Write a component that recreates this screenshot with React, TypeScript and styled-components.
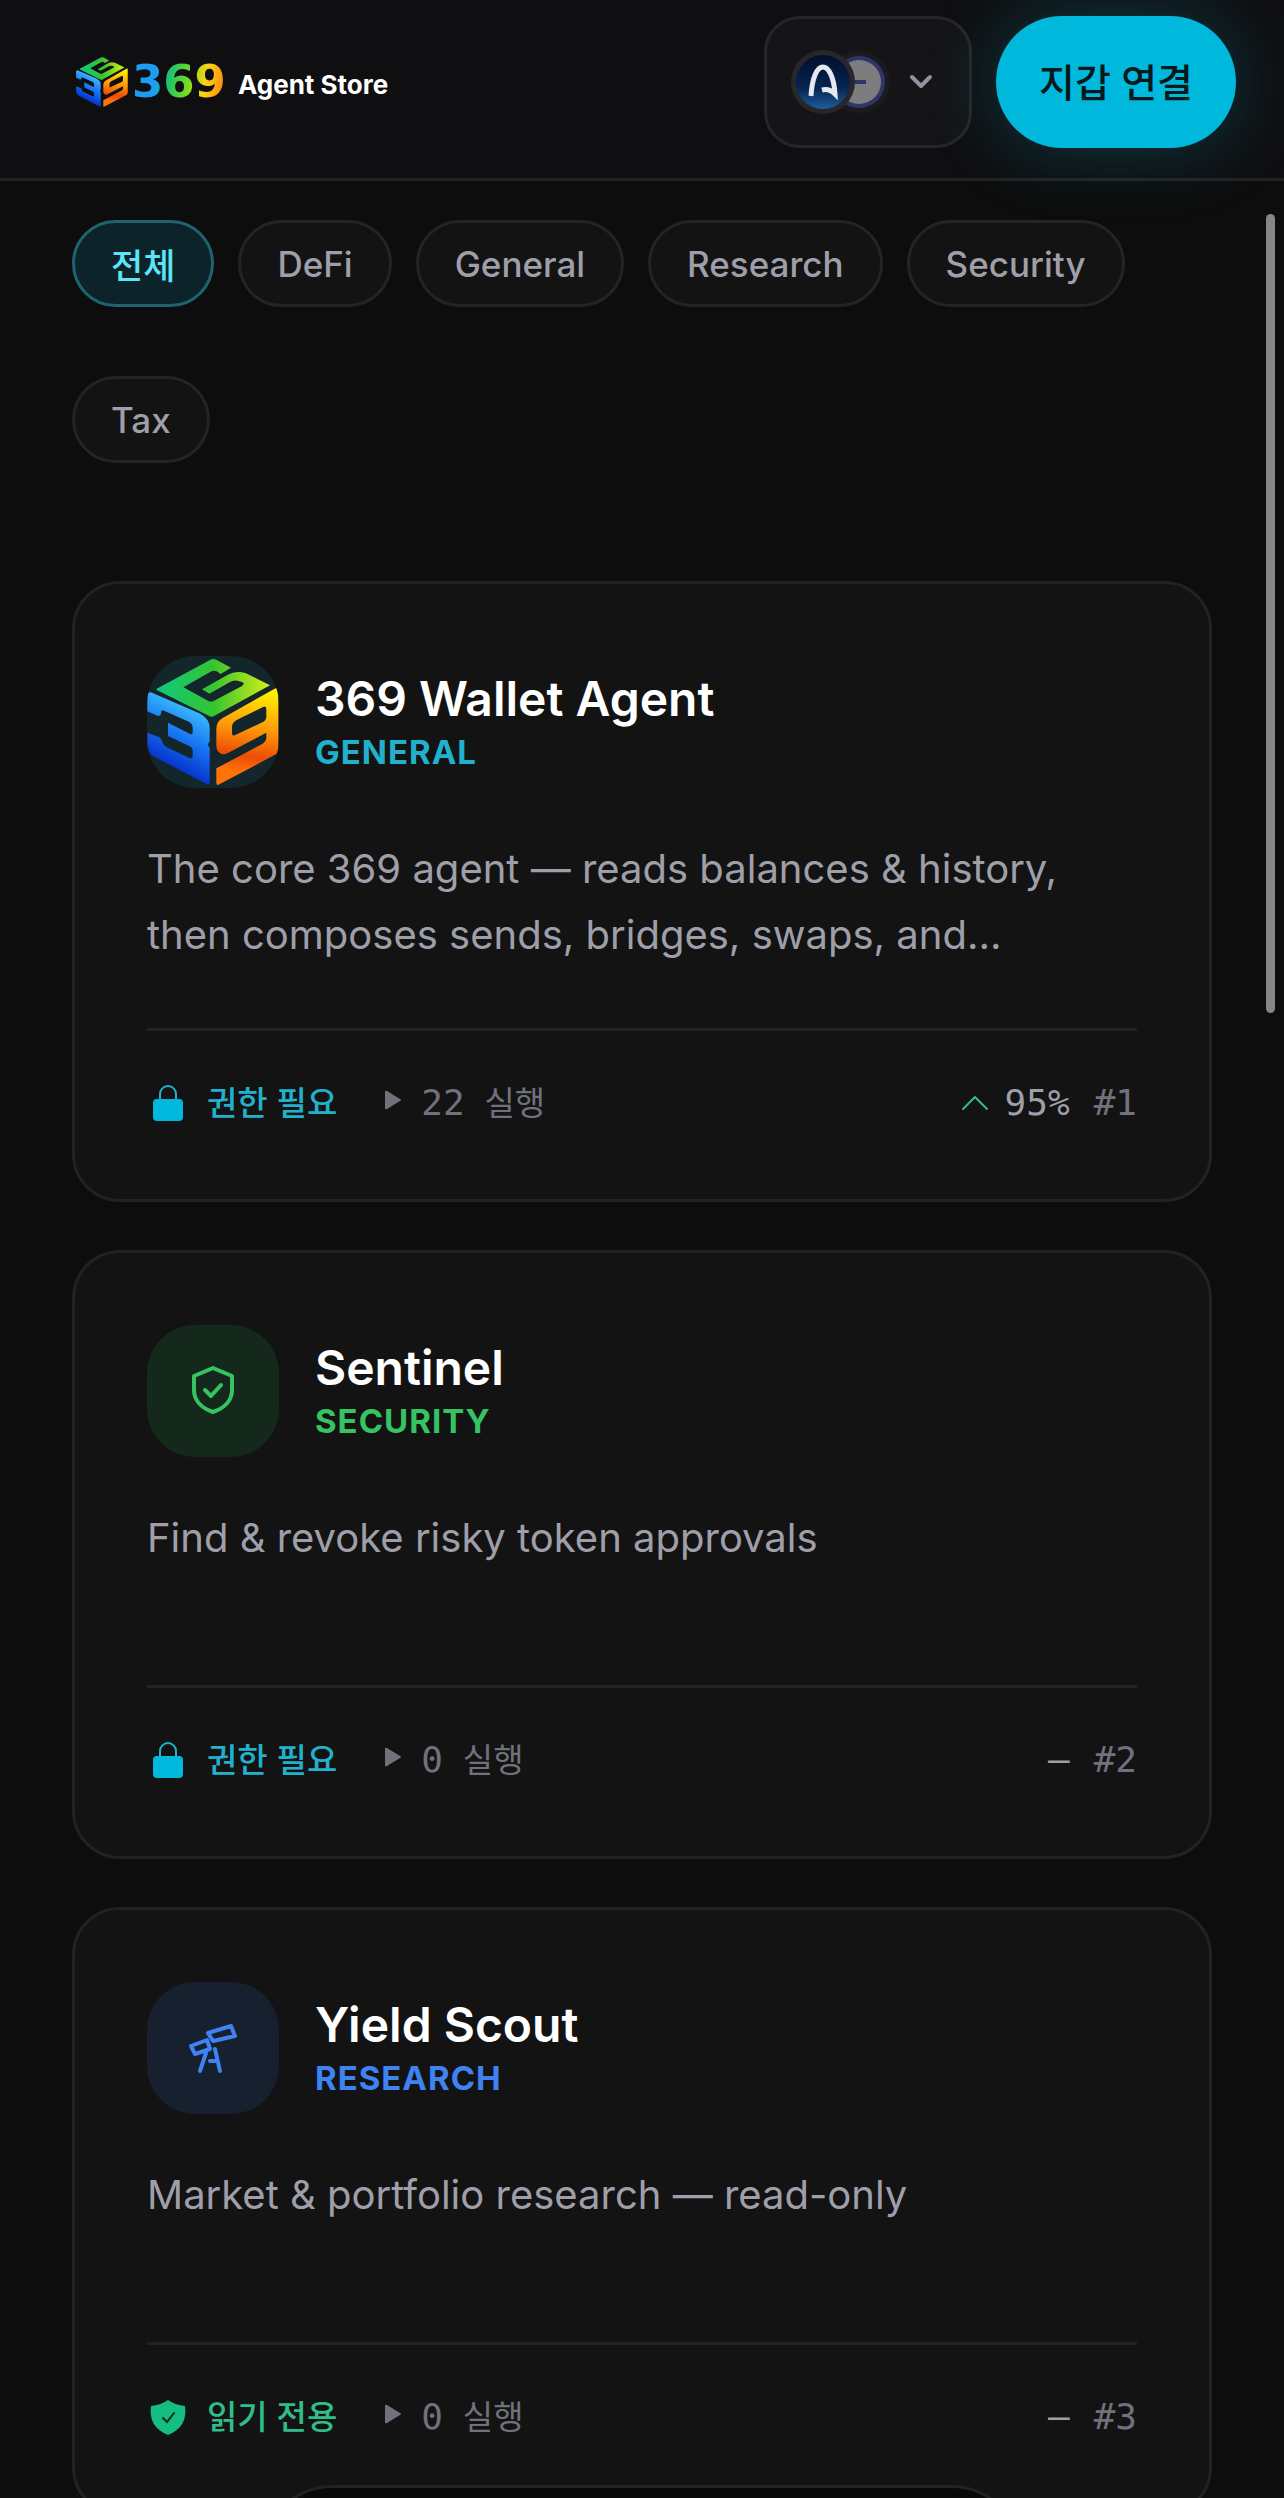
import { useId, useState } from 'react'
import styled, { createGlobalStyle } from 'styled-components'

type Tone = 'cyan' | 'green' | 'blue'

type Agent = {
  name: string
  category: string
  tone: Tone
  icon: 'cube' | 'shield' | 'telescope'
  description: string
  access: 'permission' | 'readonly'
  runs: number
  score?: string
  rank: number
}

const tones: Record<Tone, { text: string; tile: string }> = {
  cyan: { text: '#22b1cd', tile: '#13262b' },
  green: { text: '#36c463', tile: '#14281c' },
  blue: { text: '#3f82f2', tile: '#16202e' },
}

const filters = ['전체', 'DeFi', 'General', 'Research', 'Security', 'Tax']

const agents: Agent[] = [
  {
    name: '369 Wallet Agent',
    category: 'General',
    tone: 'cyan',
    icon: 'cube',
    description: 'The core 369 agent — reads balances & history, then composes sends, bridges, swaps, and…',
    access: 'permission',
    runs: 22,
    score: '95%',
    rank: 1,
  },
  {
    name: 'Sentinel',
    category: 'Security',
    tone: 'green',
    icon: 'shield',
    description: 'Find & revoke risky token approvals',
    access: 'permission',
    runs: 0,
    rank: 2,
  },
  {
    name: 'Yield Scout',
    category: 'Research',
    tone: 'blue',
    icon: 'telescope',
    description: 'Market & portfolio research — read-only',
    access: 'readonly',
    runs: 0,
    rank: 3,
  },
]

export default function App() {
  const [filter, setFilter] = useState(filters[0])

  return (
    <>
      <GlobalStyle />
      <Shell>
        <Header>
          <Brand href="#">
            <CubeMark size={52} />
            <BrandNumber>369</BrandNumber>
            <BrandName>Agent Store</BrandName>
          </Brand>
          <HeaderActions>
            <ChainButton type="button" aria-label="Networks">
              <Chains />
              <ChevronDown />
            </ChainButton>
            <ConnectButton type="button">지갑 연결</ConnectButton>
          </HeaderActions>
        </Header>

        <Main>
          <Filters>
            {filters.map(name => (
              <Chip
                key={name}
                type="button"
                $active={name === filter}
                aria-pressed={name === filter}
                onClick={() => setFilter(name)}
              >
                {name}
              </Chip>
            ))}
          </Filters>

          <Cards>
            {agents.map(agent => (
              <AgentCard key={agent.name} agent={agent} />
            ))}
          </Cards>
        </Main>

        <ScrollThumb />
        <Dock aria-label="Main" />
      </Shell>
    </>
  )
}

function AgentCard({ agent }: { agent: Agent }) {
  const readonly = agent.access === 'readonly'

  return (
    <Card>
      <CardHead>
        <Tile $tone={agent.tone}>
          {agent.icon === 'cube' && <CubeMark size={132} />}
          {agent.icon === 'shield' && <ShieldIcon />}
          {agent.icon === 'telescope' && <TelescopeIcon />}
        </Tile>
        <div>
          <Name>{agent.name}</Name>
          <Category $tone={agent.tone}>{agent.category}</Category>
        </div>
      </CardHead>

      <Description>{agent.description}</Description>

      <CardFoot>
        <Access $readonly={readonly}>
          {readonly ? <ShieldSolid /> : <LockSolid />}
          {readonly ? '읽기 전용' : '권한 필요'}
        </Access>
        <Runs>
          <PlayIcon />
          <span>
            {agent.runs}
            <small> 실행</small>
          </span>
        </Runs>
        <Stats>
          <Score>
            {agent.score && <ChevronUp />}
            {agent.score ?? '—'}
          </Score>
          <span>#{agent.rank}</span>
        </Stats>
      </CardFoot>
    </Card>
  )
}

function CubeMark({ size }: { size: number }) {
  const id = useId()

  return (
    <svg width={size} height={size} viewBox="50 48 394 396" aria-hidden="true">
      <defs>
        <linearGradient id={`${id}top`} x1="80" y1="150" x2="415" y2="140" gradientUnits="userSpaceOnUse">
          <stop offset="0" stopColor="#10c880" />
          <stop offset="0.5" stopColor="#34c430" />
          <stop offset="1" stopColor="#d4ee18" />
        </linearGradient>
        <linearGradient id={`${id}left`} x1="200" y1="220" x2="110" y2="390" gradientUnits="userSpaceOnUse">
          <stop offset="0" stopColor="#38b4fc" />
          <stop offset="0.45" stopColor="#1674f2" />
          <stop offset="1" stopColor="#0428c4" />
        </linearGradient>
        <linearGradient id={`${id}right`} x1="390" y1="150" x2="350" y2="400" gradientUnits="userSpaceOnUse">
          <stop offset="0" stopColor="#fff000" />
          <stop offset="0.45" stopColor="#ff9c08" />
          <stop offset="0.8" stopColor="#ec4c08" />
          <stop offset="1" stopColor="#ff7408" />
        </linearGradient>
      </defs>
      <path
        fill={`url(#${id}top)`}
        d="M78 146 238 60Q248 54 258 60L301 83 270 102 258 94Q250 90 240 95L158 142 232 182Q240 187 250 182L334 138Q344 131 334 126L320 122Q308 120 298 126L236 161 214 148 290 105Q316 90 346 100L418 136 254 226Q244 234 234 227L78 150Z"
      />
      <path
        fill={`url(#${id}left)`}
        d="M50 164Q54 154 64 158L206 220Q237 236 237 264V304L231 314 237 324V426Q237 436 228 432L62 346 50 322V278L86 292Q92 296 95 306 98 316 108 322L176 354Q186 358 186 348V334Q186 324 177 319L112 288V248L177 281Q186 286 186 276V264Q186 252 176 246L100 212Q92 208 91 218 90 230 80 227L50 214Z"
      />
      <path
        fill={`url(#${id}right)`}
        fillRule="evenodd"
        d="M257 266Q257 244 276 234L432 146Q443 140 443 152V326Q443 340 430 346L266 433Q257 438 257 428V385L396 311Q407 304 407 292V278L290 340Q274 347 264 336 257 330 257 316ZM318 240Q304 248 304 260V280Q304 290 314 285L397 246Q407 240 407 230V208Q407 196 397 201Z"
      />
    </svg>
  )
}

function Chains() {
  const id = useId()

  return (
    <svg width="100" height="64" viewBox="0 0 100 64" aria-hidden="true">
      <defs>
        <linearGradient id={id} x1="0" y1="0" x2="0" y2="1">
          <stop offset="0" stopColor="#020f2c" />
          <stop offset="0.6" stopColor="#052450" />
          <stop offset="1" stopColor="#1f5c9c" />
        </linearGradient>
      </defs>
      <circle cx="68" cy="32" r="31" fill="#1b1b1f" />
      <circle cx="68" cy="32" r="26" fill="#30346a" />
      <circle cx="68" cy="32" r="22" fill="#7d7d7f" />
      <path d="M56 32H75" stroke="#30346a" strokeWidth="4" />
      <circle cx="32" cy="32" r="32" fill="#27272b" />
      <circle cx="32" cy="32" r="27" fill={`url(#${id})`} />
      <path d="M20 46C21 28 26 17 32 17S43 28 44 44Q38 38 31 40" stroke="#e4e8f0" strokeWidth="5" fill="none" />
    </svg>
  )
}

function ChevronDown() {
  return (
    <svg width="36" height="36" viewBox="0 0 36 36" fill="none" stroke="#92929d" strokeWidth="4" aria-hidden="true">
      <path d="M9 13 18 22 27 13" strokeLinecap="round" strokeLinejoin="round" />
    </svg>
  )
}

function ChevronUp() {
  return (
    <svg width="36" height="36" viewBox="0 0 36 36" fill="none" stroke="#2fbd8a" strokeWidth="2" aria-hidden="true">
      <path d="M6 24 18 12 30 24" strokeLinecap="round" strokeLinejoin="round" />
    </svg>
  )
}

function PlayIcon() {
  return (
    <svg width="36" height="36" viewBox="0 0 36 36" fill="#71717b" aria-hidden="true">
      <path d="M12 7Q12 5 14 6L27 14Q29 15 27 16L14 24Q12 25 12 23Z" />
    </svg>
  )
}

function LockSolid() {
  return (
    <svg width="42" height="42" viewBox="0 0 42 42" aria-hidden="true">
      <path d="M13 19V12A8 8 0 0 1 29 12V19" fill="none" stroke="#22b1cd" strokeWidth="2" />
      <rect x="6" y="17" width="30" height="22" rx="4" fill="#00b8db" />
    </svg>
  )
}

function ShieldSolid() {
  return (
    <svg width="42" height="42" viewBox="0 0 42 42" aria-hidden="true">
      <path d="M21 4Q28 9 38 10Q41 31 21 39Q1 31 4 10Q14 9 21 4Z" fill="#14bd80" />
      <path d="M16 22 20 26 27 17" fill="none" stroke="#10251e" strokeWidth="2" strokeLinecap="round" />
    </svg>
  )
}

function ShieldIcon() {
  return (
    <svg width="60" height="60" viewBox="0 0 60 60" fill="none" stroke="#36c463" strokeWidth="4" aria-hidden="true">
      <path d="M30 7 49 15V29C49 39 42 47 30 51 18 47 11 39 11 29V15Z" strokeLinejoin="round" />
      <path d="M22 29 28 35 38 24" strokeLinecap="round" strokeLinejoin="round" />
    </svg>
  )
}

function TelescopeIcon() {
  return (
    <svg width="60" height="60" viewBox="0 0 60 60" fill="none" stroke="#3f82f2" strokeWidth="4" aria-hidden="true">
      <g strokeLinejoin="round" strokeLinecap="round">
        <path d="M25 15 48 8 52 18 30 23Z" />
        <path d="M8 28 24 22 27 31 12 36Z" />
        <path d="M23 35 17 53M32 31 37 53M27 43H34" />
      </g>
    </svg>
  )
}

const GlobalStyle = createGlobalStyle`
  * {
    box-sizing: border-box;
  }

  body {
    margin: 0;
    background: #0d0d0d;
    color: #fff;
    font-family: Inter, 'Noto Sans CJK KR', sans-serif;
  }

  button {
    font-family: inherit;
    cursor: pointer;
  }

  svg {
    display: block;
    flex: none;
  }
`

const Shell = styled.div`
  display: flex;
  flex-direction: column;
  height: 100vh;
  overflow: hidden;
`

const Header = styled.header`
  display: flex;
  align-items: center;
  justify-content: space-between;
  flex: none;
  padding: 16px 48px 30px 76px;
  border-bottom: 3px solid #222225;
  background: #0f0f11;
`

const Brand = styled.a`
  display: flex;
  align-items: center;
  color: #fff;
  text-decoration: none;
`

const BrandNumber = styled.span`
  margin: 0 12px 0 4px;
  font: bold 45px/48px 'DejaVu Sans', sans-serif;
  color: transparent;
  background: linear-gradient(100deg, #1c9cf4 26%, #22c860 42%, #7cdc20 60%, #ffd414 76%, #f87414 100%);
  background-clip: text;
`

const BrandName = styled.span`
  padding-top: 6px;
  font-size: 26px;
  line-height: 48px;
  font-weight: 700;
`

const HeaderActions = styled.div`
  display: flex;
  gap: 24px;
`

const ChainButton = styled.button`
  display: flex;
  align-items: center;
  gap: 12px;
  height: 132px;
  padding: 0 30px 0 24px;
  border: 3px solid #26262a;
  border-radius: 36px;
  background: #151517;
`

const ConnectButton = styled.button`
  height: 132px;
  padding: 0 43px 4px;
  border: 0;
  border-radius: 66px;
  background: #00b8db;
  box-shadow: 0 0 72px rgba(0, 184, 219, 0.25);
  color: #08181c;
  font-size: 39px;
  font-weight: 500;
`

const Main = styled.main`
  padding: 39px 72px 0;
`

const Filters = styled.div`
  display: flex;
  flex-wrap: wrap;
  gap: 69px 24px;
  margin-bottom: 118px;
`

const Chip = styled.button<{ $active: boolean }>`
  height: 87px;
  padding: 0 36px;
  border: 3px solid ${({ $active }) => ($active ? '#1d6470' : '#242424')};
  border-radius: 44px;
  background: ${({ $active }) => ($active ? '#0c2429' : '#131313')};
  color: ${({ $active }) => ($active ? '#5ce4f8' : '#9f9fa9')};
  font-size: 35px;
  font-weight: 500;
`

const Cards = styled.div`
  display: grid;
  gap: 48px;
`

const Card = styled.article`
  padding: 72px;
  border: 3px solid #222;
  border-radius: 48px;
  background: #131313;
`

const CardHead = styled.div`
  display: flex;
  align-items: center;
  gap: 36px;
`

const Tile = styled.div<{ $tone: Tone }>`
  display: grid;
  place-items: center;
  flex: none;
  width: 132px;
  height: 132px;
  border-radius: 48px;
  overflow: hidden;
  background: ${({ $tone }) => tones[$tone].tile};
`

const Name = styled.h2`
  margin: 0;
  font-size: 48px;
  line-height: 60px;
  font-weight: 600;
`

const Category = styled.p<{ $tone: Tone }>`
  margin: 0;
  color: ${({ $tone }) => tones[$tone].text};
  font-size: 33px;
  line-height: 46px;
  font-weight: 700;
  letter-spacing: 1px;
  text-transform: uppercase;
`

const Description = styled.p`
  min-height: 120px;
  margin: 48px 0 60px;
  color: #9f9fa9;
  font-size: 40px;
  line-height: 66px;
`

const CardFoot = styled.div`
  display: flex;
  align-items: center;
  height: 99px;
  padding-top: 48px;
  border-top: 3px solid #222;
  color: #71717b;
  font-family: 'DejaVu Sans Mono', 'Noto Sans CJK KR', monospace;
  font-size: 36px;
  line-height: 48px;
`

const Access = styled.span<{ $readonly: boolean }>`
  display: flex;
  align-items: center;
  gap: 18px;
  color: ${({ $readonly }) => ($readonly ? '#2fbd8a' : '#22b1cd')};
  font-family: Inter, 'Noto Sans CJK KR', sans-serif;
  font-size: 33px;
  font-weight: 500;
`

const Runs = styled.span`
  display: flex;
  align-items: center;
  gap: 12px;
  margin-left: 36px;

  small {
    font-size: 33px;
  }
`

const Stats = styled.span`
  display: flex;
  gap: 24px;
  margin-left: auto;
`

const Score = styled.span`
  display: flex;
  align-items: center;
  gap: 12px;
  color: #9f9fa9;
`

const ScrollThumb = styled.div`
  position: fixed;
  top: 214px;
  right: 9px;
  width: 9px;
  height: 32vh;
  border-radius: 5px;
  background: #868686;
`

const Dock = styled.nav`
  position: fixed;
  bottom: -131px;
  left: 50%;
  width: 762px;
  height: 144px;
  transform: translateX(-50%);
  border: 3px solid #222;
  border-radius: 72px;
  background: #080808;
`
